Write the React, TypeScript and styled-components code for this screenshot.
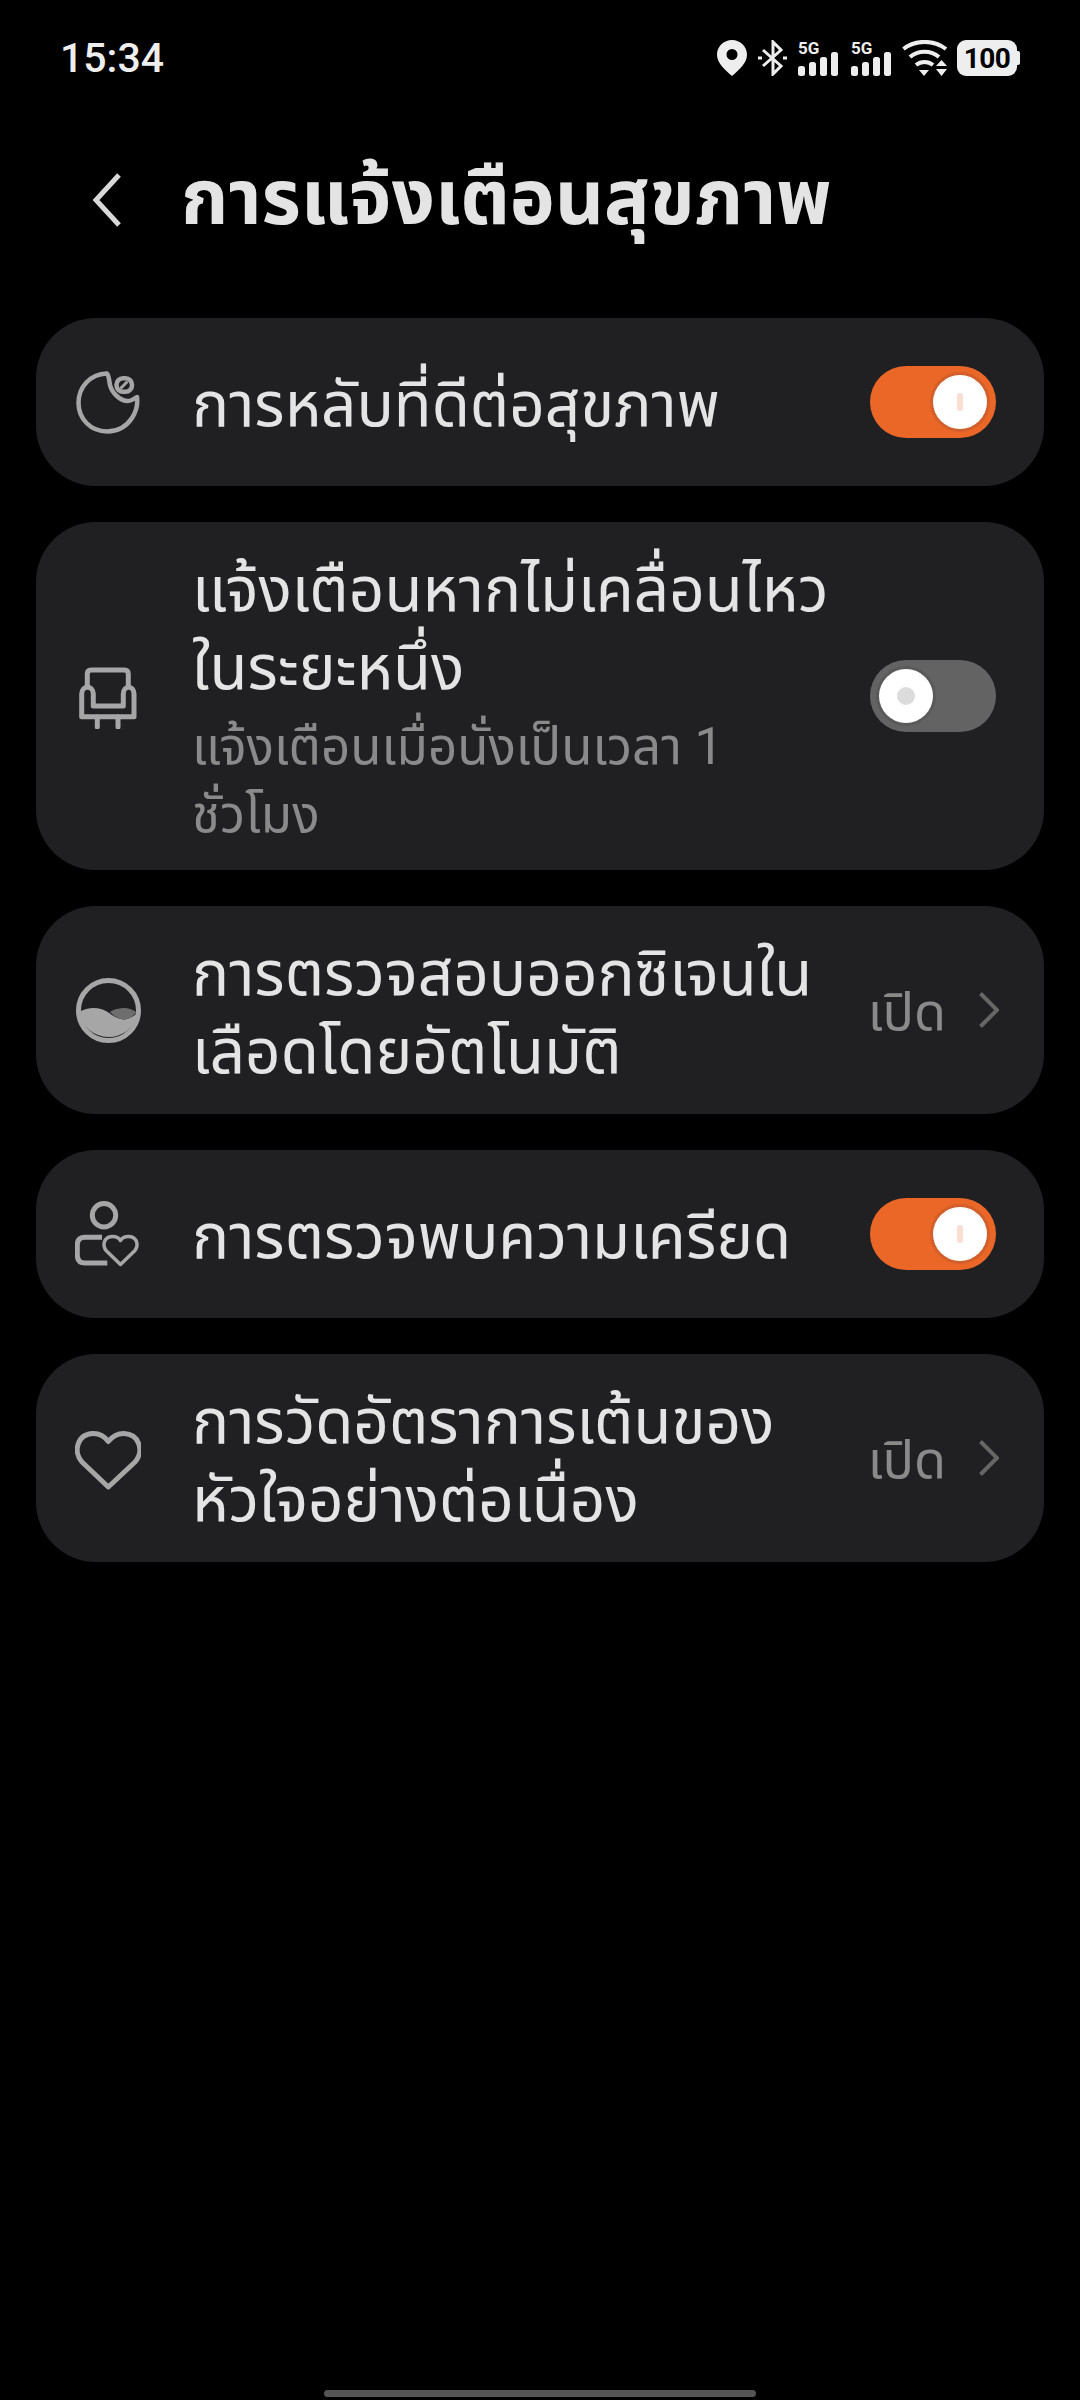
import React from 'react';
import styled, { createGlobalStyle } from 'styled-components';

const GlobalStyle = createGlobalStyle`
    html, body {
        margin: 0;
        padding: 0;
        background: #000;
    }
    * {
        box-sizing: border-box;
    }
`;

const FONT = `Roboto, "Noto Sans Thai", "Noto Sans", "DejaVu Sans", sans-serif`;

const Page = styled.div`
    width: 1080px;
    height: 2400px;
    background: #000;
    display: flex;
    flex-direction: column;
    font-family: ${FONT};
    overflow: hidden;
`;

const StatusBar = styled.div`
    display: flex;
    justify-content: space-between;
    align-items: center;
    height: 36px;
    margin-top: 40px;
    padding: 0 60px;
`;

const Clock = styled.span`
    font-size: 41px;
    font-weight: 500;
    color: #eee;
`;

const StatusIcons = styled.div`
    display: flex;
    align-items: center;
    gap: 9px;
`;

const PinSvg = styled.svg`
    margin-right: 2px;
`;

const Signal = styled.div`
    position: relative;
    width: 44px;
    height: 36px;
    display: flex;
    align-items: flex-end;
`;

const SignalLabel = styled.span`
    position: absolute;
    left: 2px;
    top: -1px;
    font-size: 17px;
    line-height: 18px;
    font-weight: 700;
    color: #eee;
`;

const Battery = styled.div`
    position: relative;
    width: 60px;
    height: 36px;
    margin-right: 3px;
    border-radius: 9px;
    background: #eee;
    color: #000;
    font-size: 28px;
    letter-spacing: -0.5px;
    font-weight: 700;
    display: flex;
    align-items: center;
    justify-content: center;

    &::after {
        content: '';
        position: absolute;
        right: -3px;
        top: 11px;
        width: 3px;
        height: 14px;
        border-radius: 0 2px 2px 0;
        background: #eee;
    }
`;

const Header = styled.div`
    display: flex;
    align-items: center;
    height: 100px;
    margin-top: 74px;
    padding-left: 92px;
    gap: 60px;
`;

const Title = styled.h1`
    margin: -4px 0 0;
    font-size: 76px;
    font-weight: 700;
    line-height: 100px;
    color: #e4e4e4;
`;

const List = styled.div`
    display: flex;
    flex-direction: column;
    gap: 36px;
    padding: 0 36px;
    margin-top: 68px;
`;

const Card = styled.div`
    display: flex;
    align-items: center;
    min-height: 168px;
    padding: 23px 48px 23px 40px;
    background: #202022;
    border-radius: 60px;
`;

const IconBox = styled.div`
    width: 64px;
    height: 64px;
    flex: none;
    margin-right: 52px;
    display: flex;
    align-items: center;
    justify-content: center;

    svg {
        flex: none;
    }
`;

const Texts = styled.div`
    flex: 1;
    margin-top: 6px;
    white-space: nowrap;
`;

const Label = styled.div`
    font-size: 62px;
    line-height: 78px;
    color: #e4e4e4;
`;

const Sub = styled.div`
    font-size: 51px;
    line-height: 68px;
    margin: 6px 0 -2px;
    color: #8a8a8a;
`;

const Value = styled.span`
    font-size: 52px;
    color: #8a8a8a;
    margin: 8px 33px 0 0;
`;

const ChevronSvg = styled.svg`
    margin-right: -3px;
    flex: none;
`;

const Track = styled.div<{ $on: boolean }>`
    width: 126px;
    height: 72px;
    flex: none;
    border-radius: 36px;
    background: ${(p) => (p.$on ? '#eb6728' : '#636363')};
    display: flex;
    align-items: center;
    justify-content: ${(p) => (p.$on ? 'flex-end' : 'flex-start')};
    padding: 0 9px;
`;

const Knob = styled.div<{ $on: boolean }>`
    width: 54px;
    height: 54px;
    border-radius: 50%;
    background: #fff;
    box-shadow: 0 0 0 3px ${(p) => (p.$on ? '#d35f2b' : '#5a5a5a')};
    display: flex;
    align-items: center;
    justify-content: center;

    &::after {
        content: '';
        display: block;
        width: ${(p) => (p.$on ? '6px' : '18px')};
        height: 18px;
        border-radius: 9px;
        background: ${(p) => (p.$on ? '#f8dfd2' : '#dcdcdc')};
    }
`;

const HomeBar = styled.div`
    width: 432px;
    height: 7px;
    margin: auto auto 3px;
    border-radius: 4px;
    background: #555;
`;

const Toggle = ({ on }: { on: boolean }) => (
    <Track $on={on}>
        <Knob $on={on} />
    </Track>
);

const Chevron = () => (
    <ChevronSvg width="20" height="36" viewBox="0 0 20 36" fill="none" stroke="#666" strokeWidth="4">
        <path d="M1.5 1.5 L18 18 L1.5 34.5" />
    </ChevronSvg>
);

const ICON_COLOR = '#a6a6a6';

const MoonIcon = () => (
    <svg width="64" height="64" viewBox="0 0 64 64" fill="none" stroke={ICON_COLOR} strokeWidth="4.5" strokeLinejoin="round">
        <path d="M30.7 3.4 C33 5 33 10 34 15 C36 23 44 31 52 31 C55 31 58 29 61 27 C62 35 60 42 56 48 C50 57 41 61.5 31 61.5 C15 61.5 2.5 49 2.5 33 C2.5 17 14 4 30.7 3.4 Z" />
        <rect x="40.5" y="8.2" width="15.5" height="13.5" rx="6.5" />
        <path d="M51.5 11.5 L44.5 18.5" strokeWidth="3" />
    </svg>
);

const SofaIcon = () => (
    <svg width="66" height="66" viewBox="15 13 66 66" fill="none" stroke={ICON_COLOR} strokeWidth="5" strokeLinecap="round" strokeLinejoin="round">
        <path d="M27.3 36 V24 Q27.3 20 31 20 H64.5 Q68.3 20 68.3 24 V36" />
        <path d="M21.7 66.7 V44 C21.7 35 33.3 35 33.3 44 V56 H63.3 V44 C63.3 35 74 35 74 44 V66.7 Z" />
        <path d="M37.3 67 V77 M58 67 V77" />
    </svg>
);

const OxygenIcon = () => (
    <svg width="65" height="65" viewBox="0 0 65 65" fill="none">
        <circle cx="32.5" cy="32.5" r="30" stroke={ICON_COLOR} strokeWidth="5" />
        <path d="M3 34 C10 30 18 29 25 31 C33 33 38 41 48 41.5 C52 41.5 56 39 62 35 A30 30 0 0 1 3 34 Z" fill={ICON_COLOR} />
        <path d="M34 34 C38 31 44 30 48 30 C52 30 56 31.5 60 34 L60 35 C56 39 52 41.5 48 41.5 C42 41 38 38 34 34 Z" fill="#6e6e6e" />
    </svg>
);

const StressIcon = () => (
    <svg width="66" height="66" viewBox="0 0 66 66" fill="none" stroke={ICON_COLOR} strokeWidth="5">
        <circle cx="29" cy="14.3" r="11.7" />
        <path d="M27 36.3 H10 Q2.3 36.3 2.3 44 V54 Q2.3 62 10 62 H32.3" />
        <path
            d="M45.5 63.5 L31.5 50 C27 45 28.5 36 37 35.5 C41 35.3 44 37 45.5 39.5 C47 37 50 35.3 54 35.5 C62.5 36 64 45 59.5 50 Z"
            strokeWidth="3.5"
            strokeLinejoin="round"
        />
    </svg>
);

const HeartIcon = () => (
    <svg width="66" height="66" viewBox="15 15 66 66" fill="none" stroke={ICON_COLOR} strokeWidth="5" strokeLinejoin="round">
        <path d="M48.3 77 L22 52 C13 42 17 24 33 23.5 C40 23.3 45 27 48.3 31.5 C52 27 57 23.3 64 23.5 C80 24 84 42 75 52 Z" />
    </svg>
);

const PinIcon = () => (
    <PinSvg width="30" height="36" viewBox="0 0 30 36">
        <path
            fillRule="evenodd"
            fill="#eee"
            d="M15 0 C6.7 0 0 6.5 0 14.7 C0 23 8 30 15 36 C22 30 30 23 30 14.7 C30 6.5 23.3 0 15 0 Z M15 9 A5.5 5.5 0 1 1 15 20 A5.5 5.5 0 1 1 15 9 Z"
        />
    </PinSvg>
);

const BluetoothIcon = () => (
    <svg width="29" height="36" viewBox="0 0 29 36" fill="none" stroke="#eee" strokeWidth="3">
        <path d="M5 10 L23 26 L15 34 V2 L23 10 L5 26" />
        <path d="M0 18 H4 M25 18 H29" />
    </svg>
);

const SignalIcon = () => (
    <Signal>
        <SignalLabel>5G</SignalLabel>
        <svg width="44" height="24" viewBox="0 0 44 24" fill="#eee">
            <rect x="2" y="14" width="7" height="10" rx="2.5" />
            <rect x="13" y="10" width="7" height="14" rx="2.5" />
            <rect x="24" y="5" width="7" height="19" rx="2.5" />
            <rect x="35" y="0" width="7" height="24" rx="2.5" />
        </svg>
    </Signal>
);

const WifiIcon = () => (
    <svg width="46" height="36" viewBox="0 0 46 36" fill="none" stroke="#eee" strokeWidth="4">
        <path d="M1.5 9 C13 -0.5 32 -0.5 44 9" />
        <path d="M8 17 C16 10 29 10 37 17" />
        <path d="M14 25 C19 21 26 21 31 25" />
        <path d="M17 30 H27 L22 36 Z" fill="#eee" stroke="none" />
        <path d="M34 26 L39.5 20 L45 26 Z M34 29 H45 L39.5 36 Z" fill="#eee" stroke="none" />
    </svg>
);

const App = () => (
    <Page>
        <GlobalStyle />
        <StatusBar>
            <Clock>15:34</Clock>
            <StatusIcons>
                <PinIcon />
                <BluetoothIcon />
                <SignalIcon />
                <SignalIcon />
                <WifiIcon />
                <Battery>100</Battery>
            </StatusIcons>
        </StatusBar>
        <Header>
            <svg width="29" height="54" viewBox="0 0 29 54" fill="none" stroke="#d8d8d8" strokeWidth="5">
                <path d="M27 2 L4 27 L27 52" />
            </svg>
            <Title>การแจ้งเตือนสุขภาพ</Title>
        </Header>
        <List>
            <Card>
                <IconBox><MoonIcon /></IconBox>
                <Texts><Label>การหลับที่ดีต่อสุขภาพ</Label></Texts>
                <Toggle on />
            </Card>
            <Card>
                <IconBox><SofaIcon /></IconBox>
                <Texts>
                    <Label>แจ้งเตือนหากไม่เคลื่อนไหว<br />ในระยะหนึ่ง</Label>
                    <Sub>แจ้งเตือนเมื่อนั่งเป็นเวลา 1<br />ชั่วโมง</Sub>
                </Texts>
                <Toggle on={false} />
            </Card>
            <Card>
                <IconBox><OxygenIcon /></IconBox>
                <Texts><Label>การตรวจสอบออกซิเจนใน<br />เลือดโดยอัตโนมัติ</Label></Texts>
                <Value>เปิด</Value>
                <Chevron />
            </Card>
            <Card>
                <IconBox><StressIcon /></IconBox>
                <Texts><Label>การตรวจพบความเครียด</Label></Texts>
                <Toggle on />
            </Card>
            <Card>
                <IconBox><HeartIcon /></IconBox>
                <Texts><Label>การวัดอัตราการเต้นของ<br />หัวใจอย่างต่อเนื่อง</Label></Texts>
                <Value>เปิด</Value>
                <Chevron />
            </Card>
        </List>
        <HomeBar />
    </Page>
);

export default App;
